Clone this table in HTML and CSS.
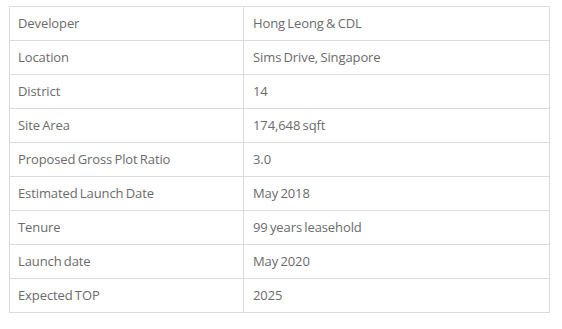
FILE: index.html
```html
<!DOCTYPE html>
<html lang="en">
<head>
    <meta charset="UTF-8">
    <meta name="viewport" content="width=device-width, initial-scale=1.0">
    <title>Project Details</title>
    <link rel="stylesheet" href="styles.css">
</head>
<body>
    <div class="wrap">
        <table class="details">
            <tr><td>Developer</td><td>Hong Leong &amp; CDL</td></tr>
            <tr><td>Location</td><td>Sims Drive, Singapore</td></tr>
            <tr><td>District</td><td>14</td></tr>
            <tr><td>Site Area</td><td>174,648 sqft</td></tr>
            <tr><td>Proposed Gross Plot Ratio</td><td>3.0</td></tr>
            <tr><td>Estimated Launch Date</td><td>May 2018</td></tr>
            <tr><td>Tenure</td><td>99 years leasehold</td></tr>
            <tr><td>Launch date</td><td>May 2020</td></tr>
            <tr><td>Expected TOP</td><td>2025</td></tr>
        </table>
    </div>
</body>
</html>
```

FILE: styles.css
```css
body {
    margin: 0;
    background: #fff;
    font-family: "Open Sans", Arial, sans-serif;
}
.wrap {
    padding: 6px 0 0 9px;
}
.details {
    width: 541px;
    border-collapse: collapse;
    font-size: 13px;
    color: #6b6b6b;
    letter-spacing: -0.1px;
    word-spacing: -1px;
}
.details td {
    border: 1px solid #dcdcdc;
    padding: 6px 9px 6px 8px;
    line-height: 21px;
    vertical-align: middle;
}
.details td:first-child {
    width: 216px;
}
.details td:last-child {
    padding-left: 9px;
}
```
